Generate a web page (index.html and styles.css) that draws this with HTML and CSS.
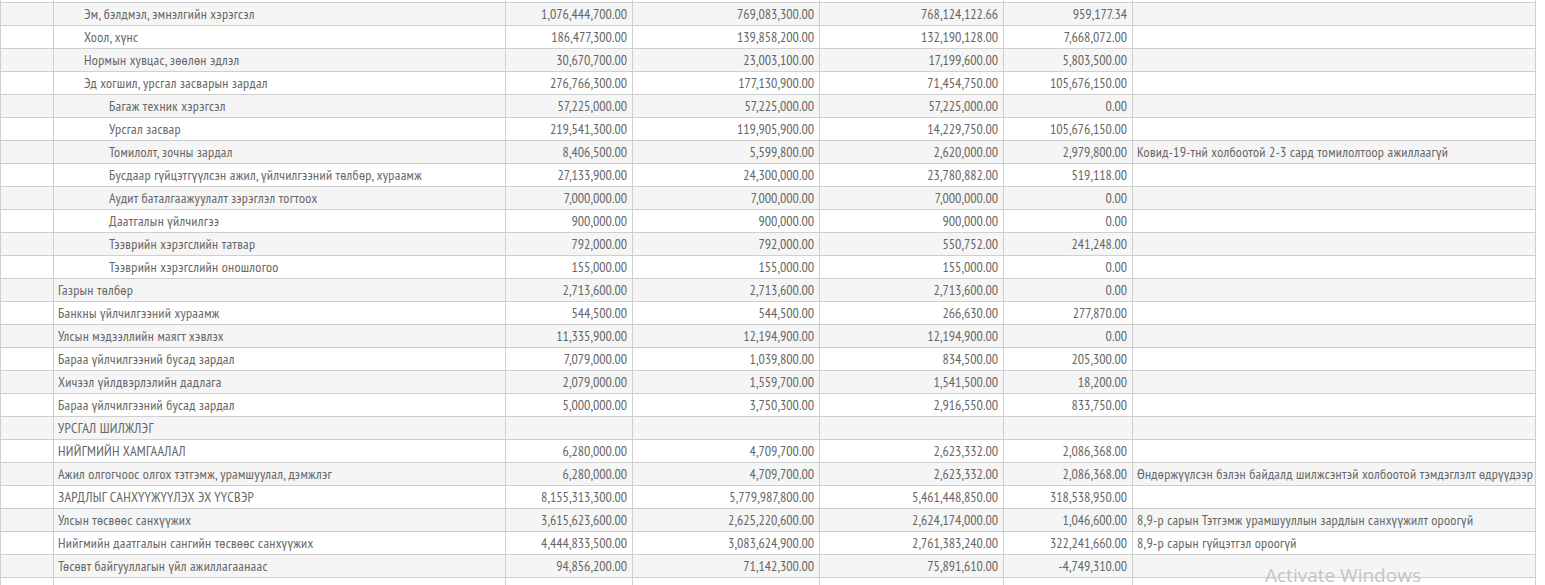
FILE: index.html
```html
<!DOCTYPE html>
<html lang="mn">
<head>
<meta charset="utf-8">
<title>Зардлын гүйцэтгэл</title>
<link rel="stylesheet" href="styles.css">
</head>
<body>
<div class="page">
<table class="report">
<colgroup>
<col class="c-no"><col class="c-name"><col class="c-n1"><col class="c-n2"><col class="c-n3"><col class="c-n4"><col class="c-note">
</colgroup>
<tbody>
<tr><td></td><td></td><td></td><td></td><td></td><td></td><td></td></tr>
<tr><td></td><td class="name l1">Эм, бэлдмэл, эмнэлгийн хэрэгсэл</td><td class="num">1,076,444,700.00</td><td class="num">769,083,300.00</td><td class="num">768,124,122.66</td><td class="num">959,177.34</td><td class="note"></td></tr>
<tr><td></td><td class="name l1">Хоол, хүнс</td><td class="num">186,477,300.00</td><td class="num">139,858,200.00</td><td class="num">132,190,128.00</td><td class="num">7,668,072.00</td><td class="note"></td></tr>
<tr><td></td><td class="name l1">Нормын хувцас, зөөлөн эдлэл</td><td class="num">30,670,700.00</td><td class="num">23,003,100.00</td><td class="num">17,199,600.00</td><td class="num">5,803,500.00</td><td class="note"></td></tr>
<tr><td></td><td class="name l1">Эд хогшил, урсгал засварын зардал</td><td class="num">276,766,300.00</td><td class="num">177,130,900.00</td><td class="num">71,454,750.00</td><td class="num">105,676,150.00</td><td class="note"></td></tr>
<tr><td></td><td class="name l2">Багаж техник хэрэгсэл</td><td class="num">57,225,000.00</td><td class="num">57,225,000.00</td><td class="num">57,225,000.00</td><td class="num">0.00</td><td class="note"></td></tr>
<tr><td></td><td class="name l2">Урсгал засвар</td><td class="num">219,541,300.00</td><td class="num">119,905,900.00</td><td class="num">14,229,750.00</td><td class="num">105,676,150.00</td><td class="note"></td></tr>
<tr><td></td><td class="name l2">Томилолт, зочны зардал</td><td class="num">8,406,500.00</td><td class="num">5,599,800.00</td><td class="num">2,620,000.00</td><td class="num">2,979,800.00</td><td class="note">Ковид-19-тнй холбоотой 2-3 сард томилолтоор ажиллаагүй</td></tr>
<tr><td></td><td class="name l2">Бусдаар гүйцэтгүүлсэн ажил, үйлчилгээний төлбөр, хураамж</td><td class="num">27,133,900.00</td><td class="num">24,300,000.00</td><td class="num">23,780,882.00</td><td class="num">519,118.00</td><td class="note"></td></tr>
<tr><td></td><td class="name l2">Аудит баталгаажуулалт зэрэглэл тогтоох</td><td class="num">7,000,000.00</td><td class="num">7,000,000.00</td><td class="num">7,000,000.00</td><td class="num">0.00</td><td class="note"></td></tr>
<tr><td></td><td class="name l2">Даатгалын үйлчилгээ</td><td class="num">900,000.00</td><td class="num">900,000.00</td><td class="num">900,000.00</td><td class="num">0.00</td><td class="note"></td></tr>
<tr><td></td><td class="name l2">Тээврийн хэрэгслийн татвар</td><td class="num">792,000.00</td><td class="num">792,000.00</td><td class="num">550,752.00</td><td class="num">241,248.00</td><td class="note"></td></tr>
<tr><td></td><td class="name l2">Тээврийн хэрэгслийн оношлогоо</td><td class="num">155,000.00</td><td class="num">155,000.00</td><td class="num">155,000.00</td><td class="num">0.00</td><td class="note"></td></tr>
<tr><td></td><td class="name">Газрын төлбөр</td><td class="num">2,713,600.00</td><td class="num">2,713,600.00</td><td class="num">2,713,600.00</td><td class="num">0.00</td><td class="note"></td></tr>
<tr><td></td><td class="name">Банкны үйлчилгээний хураамж</td><td class="num">544,500.00</td><td class="num">544,500.00</td><td class="num">266,630.00</td><td class="num">277,870.00</td><td class="note"></td></tr>
<tr><td></td><td class="name">Улсын мэдээллийн маягт хэвлэх</td><td class="num">11,335,900.00</td><td class="num">12,194,900.00</td><td class="num">12,194,900.00</td><td class="num">0.00</td><td class="note"></td></tr>
<tr><td></td><td class="name">Бараа үйлчилгээний бусад зардал</td><td class="num">7,079,000.00</td><td class="num">1,039,800.00</td><td class="num">834,500.00</td><td class="num">205,300.00</td><td class="note"></td></tr>
<tr><td></td><td class="name">Хичээл үйлдвэрлэлийн дадлага</td><td class="num">2,079,000.00</td><td class="num">1,559,700.00</td><td class="num">1,541,500.00</td><td class="num">18,200.00</td><td class="note"></td></tr>
<tr><td></td><td class="name">Бараа үйлчилгээний бусад зардал</td><td class="num">5,000,000.00</td><td class="num">3,750,300.00</td><td class="num">2,916,550.00</td><td class="num">833,750.00</td><td class="note"></td></tr>
<tr><td></td><td class="name">УРСГАЛ ШИЛЖЛЭГ</td><td class="num"></td><td class="num"></td><td class="num"></td><td class="num"></td><td class="note"></td></tr>
<tr><td></td><td class="name">НИЙГМИЙН ХАМГААЛАЛ</td><td class="num">6,280,000.00</td><td class="num">4,709,700.00</td><td class="num">2,623,332.00</td><td class="num">2,086,368.00</td><td class="note"></td></tr>
<tr><td></td><td class="name">Ажил олгогчоос олгох тэтгэмж, урамшуулал, дэмжлэг</td><td class="num">6,280,000.00</td><td class="num">4,709,700.00</td><td class="num">2,623,332.00</td><td class="num">2,086,368.00</td><td class="note">Өндөржүүлсэн бэлэн байдалд шилжсэнтэй холбоотой тэмдэглэлт өдрүүдээр</td></tr>
<tr><td></td><td class="name">ЗАРДЛЫГ САНХҮҮЖҮҮЛЭХ ЭХ ҮҮСВЭР</td><td class="num">8,155,313,300.00</td><td class="num">5,779,987,800.00</td><td class="num">5,461,448,850.00</td><td class="num">318,538,950.00</td><td class="note"></td></tr>
<tr><td></td><td class="name">Улсын төсвөөс санхүүжих</td><td class="num">3,615,623,600.00</td><td class="num">2,625,220,600.00</td><td class="num">2,624,174,000.00</td><td class="num">1,046,600.00</td><td class="note">8,9-р сарын Тэтгэмж урамшууллын зардлын санхүүжилт ороогүй</td></tr>
<tr><td></td><td class="name">Нийгмийн даатгалын сангийн төсвөөс санхүүжих</td><td class="num">4,444,833,500.00</td><td class="num">3,083,624,900.00</td><td class="num">2,761,383,240.00</td><td class="num">322,241,660.00</td><td class="note">8,9-р сарын гүйцэтгэл ороогүй</td></tr>
<tr><td></td><td class="name">Төсөвт байгууллагын үйл ажиллагаанаас</td><td class="num">94,856,200.00</td><td class="num">71,142,300.00</td><td class="num">75,891,610.00</td><td class="num">-4,749,310.00</td><td class="note"></td></tr>
<tr><td></td><td></td><td></td><td></td><td></td><td></td><td></td></tr>
</tbody>
</table>
<div class="watermark">Activate Windows</div>
</div>
</body>
</html>
```
FILE: styles.css
```css
html, body {
  margin: 0;
  padding: 0;
  background: #fff;
  overflow: hidden;
}
.page {
  position: relative;
  width: 1545px;
  height: 585px;
  overflow: hidden;
}
.report {
  border-collapse: collapse;
  table-layout: fixed;
  width: 1536px;
  margin-top: -21px;
  font-family: "Liberation Sans Narrow", "PT Sans Narrow", "DejaVu Sans Condensed", sans-serif;
  font-size: 14px;
  color: #666;
}
.c-no { width: 53px; }
.c-name { width: 452px; }
.c-n1 { width: 127px; }
.c-n2 { width: 187px; }
.c-n3 { width: 184px; }
.c-n4 { width: 129px; }
.c-note { width: 403px; }
.report td {
  border: 1px solid #cfcfcf;
  height: 23px;
  padding: 0 4px;
  box-sizing: border-box;
  white-space: nowrap;
  overflow: hidden;
  line-height: 20px;
}
.report tr:nth-child(even) td {
  background: #f5f5f5;
}
.report td.num {
  text-align: right;
  padding-right: 5px;
}
.report td.name,
.report td.note {
  letter-spacing: 0.3px;
}
.report td.name.l1 { padding-left: 30px; }
.report td.name.l2 { padding-left: 55px; }
.report td.note { padding-left: 4px; }
.watermark {
  position: absolute;
  left: 1265px;
  top: 566px;
  font-family: "Open Sans", "Noto Sans", sans-serif;
  font-size: 19px;
  line-height: 1;
  color: #c4c4c4;
}
```
